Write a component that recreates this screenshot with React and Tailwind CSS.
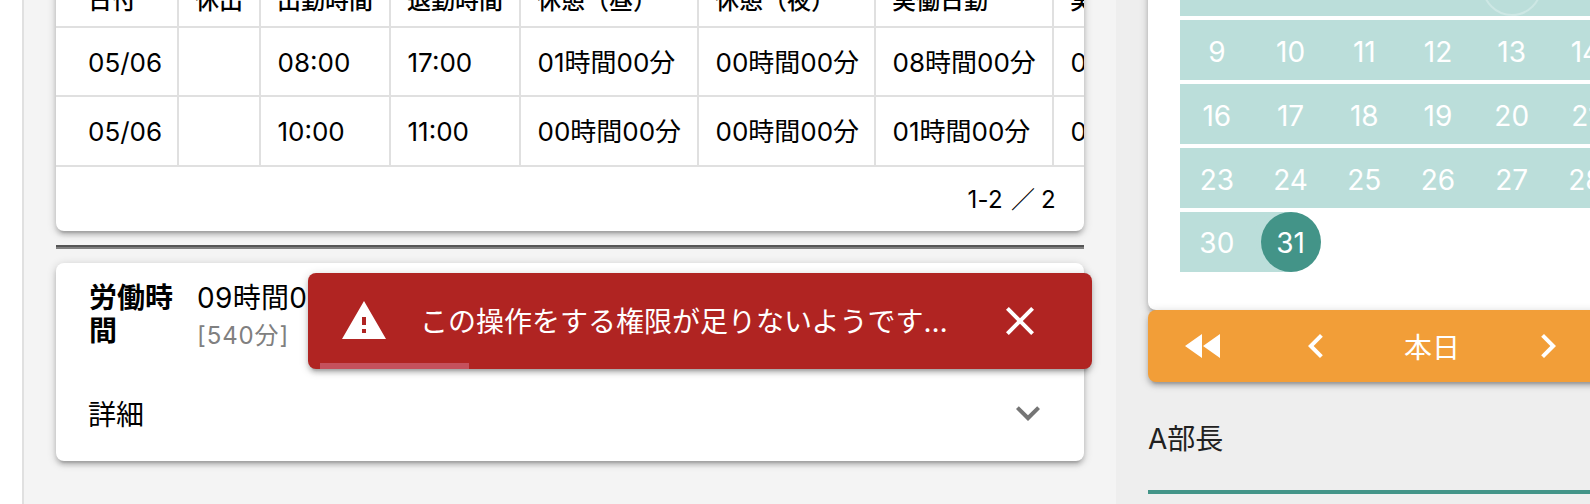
import React from "react";
import {
  MdWarning,
  MdClose,
  MdExpandMore,
  MdFastRewind,
  MdChevronLeft,
  MdChevronRight,
} from "react-icons/md";

const COLUMNS = "grid-cols-[123px_82px_130px_130px_178px_177px_178px_178px]";

const HEADERS = ["日付", "休出", "出勤時間", "退勤時間", "休憩（昼）", "休憩（夜）", "実働日勤", "実働夜勤"];

const ROWS = [
  { height: "h-[69px]", cells: ["05/06", "", "08:00", "17:00", "01時間00分", "00時間00分", "08時間00分", "00時間00分"] },
  { height: "h-[70px]", cells: ["05/06", "", "10:00", "11:00", "00時間00分", "00時間00分", "01時間00分", "00時間00分"] },
];

const WEEKS = [
  [9, 10, 11, 12, 13, 14, 15],
  [16, 17, 18, 19, 20, 21, 22],
  [23, 24, 25, 26, 27, 28, 29],
];

const ELEVATION =
  "shadow-[0_2px_10px_rgba(0,0,0,0.2),0_4px_4px_rgba(0,0,0,0.14),0_6px_2px_-4px_rgba(0,0,0,0.12)]";

function AttendanceTable() {
  return (
    <div className={`-mt-5 h-[251px] w-[1028px] overflow-hidden rounded-b-lg bg-white pt-5 ${ELEVATION}`}>
      <div className={`grid h-7 w-[1174px] ${COLUMNS} border-b-2 border-[#e0e0e0]`}>
        {HEADERS.map((label, i) => (
          <div
            key={label}
            className={`flex h-[26px] items-end border-r-2 border-[#e0e0e0] ${i === 0 ? "pl-8" : "pl-4"}`}
          >
            <span className="mb-[10px] whitespace-nowrap text-[24px] font-medium leading-[30px]">{label}</span>
          </div>
        ))}
      </div>
      {ROWS.map((row, r) => (
        <div key={r} className={`grid w-[1174px] ${row.height} ${COLUMNS} border-b-2 border-[#e0e0e0]`}>
          {row.cells.map((cell, i) => (
            <div
              key={i}
              className={`flex items-center whitespace-nowrap border-r-2 border-[#e0e0e0] pt-0.5 text-[26px] leading-[36px] ${i === 0 ? "pl-8" : "pl-[16.5px]"}`}
            >
              {cell}
            </div>
          ))}
        </div>
      ))}
      <div className="flex h-16 items-center justify-end whitespace-pre pr-7 pt-0.5 text-[24px] tracking-[0.3px]">
        1-2 <span className="pl-px pr-px font-medium tracking-[-2px]">／</span> 2
      </div>
    </div>
  );
}

function SummaryCard() {
  return (
    <div className={`mt-[14px] flex h-[198px] w-[1028px] flex-col rounded-lg bg-white px-8 ${ELEVATION}`}>
      <div className="flex h-[102px] pt-[17px]">
        <div className="w-[109px] pl-px pr-5 pt-0.5 text-[28px] font-bold leading-[33px]">労働時間</div>
        <div className="whitespace-nowrap">
          <div className="text-[28px] leading-9 tracking-[0.3px]">09時間00分</div>
          <div className="text-[24px] leading-10 tracking-[0.9px] text-[#808080]">[540分]</div>
        </div>
      </div>
      <div className="flex h-24 items-center justify-between text-[28px]">
        <span className="pt-[3px]">詳細</span>
        <MdExpandMore size={48} className="text-[#757575]" />
      </div>
    </div>
  );
}

function Toast() {
  return (
    <div
      className={`absolute left-[308px] top-[273px] flex h-24 w-[784px] items-center rounded-lg bg-[#b02422] pl-8 text-white ${ELEVATION}`}
    >
      <MdWarning size={48} className="shrink-0" />
      <span className="ml-8 w-[576px] whitespace-nowrap pt-0.5 text-[28px] leading-10">
        この操作をする権限が足りないようです…
      </span>
      <MdClose size={48} className="shrink-0" />
      <div className="absolute bottom-0 left-3 h-[6px] w-[149px] bg-[#c5515d]" />
    </div>
  );
}

function Calendar() {
  return (
    <div className={`-mt-5 h-[330px] w-[580px] rounded-b-lg bg-white px-8 pt-5 ${ELEVATION}`}>
      <div className="flex w-[516px] flex-col gap-1 text-[28px] text-white">
        <div className="grid h-4 grid-cols-7 overflow-hidden bg-[#bbdeda]">
          <div className="col-start-5 -mt-11 size-[60px] justify-self-center rounded-full border-2 border-[#cde7e4]" />
        </div>
        {WEEKS.map((week) => (
          <div key={week[0]} className="grid h-[60px] grid-cols-7 items-center bg-[#bbdeda] pt-[3px] text-center">
            {week.map((day) => (
              <span key={day}>{day}</span>
            ))}
          </div>
        ))}
        <div className="grid h-[60px] grid-cols-7 text-center leading-[63px]">
          <span className="h-[60px] bg-[#bbdeda]">30</span>
          <div className="flex h-[60px] justify-center bg-linear-to-r from-[#bbdeda] from-50% to-transparent to-50%">
            <span className="size-[60px] shrink-0 rounded-full bg-[#439488]">31</span>
          </div>
        </div>
      </div>
    </div>
  );
}

function DayNavigation() {
  return (
    <div
      className={`flex h-[72px] w-[580px] items-center rounded-lg bg-[#f29e38] pl-4 text-[28px] text-white ${ELEVATION}`}
    >
      <span className="flex w-28 pl-4">
        <MdFastRewind size={48} />
      </span>
      <span className="flex w-28 pl-4">
        <MdChevronLeft size={48} />
      </span>
      <span className="w-[120px] pl-4 pt-[3px]">本日</span>
      <span className="flex w-28 pl-4">
        <MdChevronRight size={48} />
      </span>
    </div>
  );
}

export default function App() {
  return (
    <div className="relative flex h-[504px] w-[1590px] overflow-hidden bg-white font-['Inter','Noto_Sans_CJK_JP',sans-serif] text-black">
      <main className="ml-[22px] flex h-full w-[1094px] shrink-0 flex-col border-l-2 border-[#e0e0e0] bg-[#f4f4f4] pl-8">
        <AttendanceTable />
        <div className="mt-[14px] h-1 w-[1028px] border-b-2 border-t-2 border-b-[#808080] border-t-[#555555]" />
        <SummaryCard />
      </main>
      <aside className="flex h-full w-[474px] shrink-0 flex-col overflow-hidden bg-[#eeeeee] pl-8">
        <Calendar />
        <DayNavigation />
        <div className="h-28 w-[580px] shrink-0 border-b-4 border-[#439488] pt-[37px] text-[28px] leading-10 text-[#212121]">
          A部長
        </div>
      </aside>
      <Toast />
    </div>
  );
}
